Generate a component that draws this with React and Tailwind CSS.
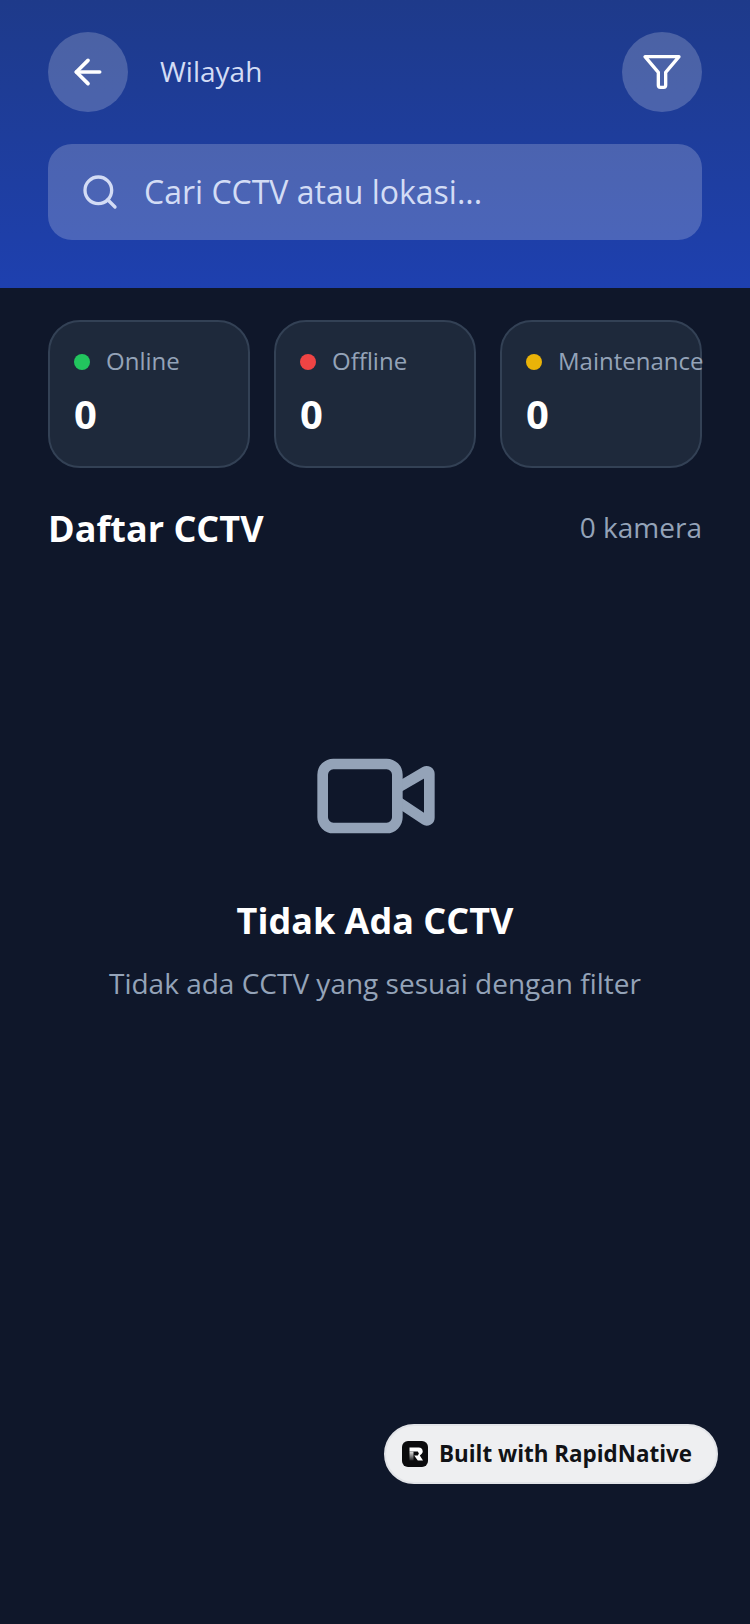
import React from "react";
import { ArrowLeft, Search, Video } from "lucide-react";

function Stat({ dot, label }) {
  return (
    <div className="flex h-[148px] w-[202px] flex-col rounded-[32px] border-2 border-[#334155] bg-[#1e293b] px-[24px] pt-[23px]">
      <div className="flex h-[32px] items-center gap-[16px]">
        <span className={`mt-[2px] h-[16px] w-[16px] shrink-0 rounded-full ${dot}`} />
        <span className="text-[24px] leading-[32px] whitespace-nowrap text-[#94a3b8]">{label}</span>
      </div>
      <div className="mt-[9px] text-[40px] leading-[56px] font-bold text-white">0</div>
    </div>
  );
}

export default function App() {
  return (
    <div className="relative flex h-[1624px] w-[750px] flex-col overflow-hidden bg-[#0f172a] font-['Open_Sans',sans-serif]">
      <header className="flex h-[288px] flex-col bg-gradient-to-b from-[#1e3a8a] to-[#1e40af] px-[48px] pt-[32px]">
        <div className="flex items-center justify-between">
          <div className="flex items-center gap-[32px]">
            <div className="flex h-[80px] w-[80px] items-center justify-center rounded-full bg-white/20">
              <ArrowLeft size={40} strokeWidth={2.2} className="text-white" />
            </div>
            <span className="-mt-[2px] text-[28px] leading-[40px] text-[#d3dcf5]">Wilayah</span>
          </div>
          <div className="flex h-[80px] w-[80px] items-center justify-center rounded-full bg-white/20">
            <svg width="40" height="40" viewBox="0 0 24 24" fill="none" stroke="white" strokeWidth="2" strokeLinecap="round" strokeLinejoin="round">
              <path d="M1.8 2.8h20.4l-8 9.4v7.8a1.2 1.2 0 0 1-1.2 1.2h-2a1.2 1.2 0 0 1-1.2-1.2v-7.8z" />
            </svg>
          </div>
        </div>
        <div className="mt-[32px] flex h-[96px] items-center gap-[24px] rounded-[24px] bg-white/20 px-[32px]">
          <Search size={40} strokeWidth={2} className="text-[#d3dcf5]" />
          <span className="text-[32px] leading-[44px] text-[#d3dcf5]">Cari CCTV atau lokasi...</span>
        </div>
      </header>

      <main className="flex flex-1 flex-col px-[48px] pt-[32px]">
        <div className="flex justify-between">
          <Stat dot="bg-[#22c55e]" label="Online" />
          <Stat dot="bg-[#ef4444]" label="Offline" />
          <Stat dot="bg-[#eab308]" label="Maintenance" />
        </div>
        <div className="mt-[35px] flex items-start justify-between">
          <h2 className="text-[36px] leading-[52px] font-bold text-white">Daftar CCTV</h2>
          <span className="mt-[4px] text-[28px] leading-[40px] text-[#94a3b8]">0 kamera</span>
        </div>
        <div className="mt-[177px] flex flex-col items-center">
          <Video size={128} strokeWidth={2} className="ml-[2px] text-[#94a3b8]" />
          <h3 className="mt-[35px] text-[36px] leading-[52px] font-bold text-white">Tidak Ada CCTV</h3>
          <p className="mt-[16px] text-[28px] leading-[40px] text-[#94a3b8]">Tidak ada CCTV yang sesuai dengan filter</p>
        </div>
      </main>

      <div className="absolute top-[1424px] left-[384px] flex h-[60px] w-[334px] items-center gap-[11px] rounded-full border-2 border-[#e2e4e8] bg-[#eeeff1] pl-[16px]">
        <svg width="26" height="26" viewBox="0 0 26 26">
          <defs>
            <linearGradient id="rfade" x1="0" y1="0" x2="0" y2="1">
              <stop offset="0" stopColor="#ffffff" stopOpacity="0.9" />
              <stop offset="1" stopColor="#ffffff" stopOpacity="0.1" />
            </linearGradient>
          </defs>
          <rect width="26" height="26" rx="6" fill="#0b0b0d" />
          <path d="M7.5 6.5h9.5a3.8 3.8 0 0 1 2.8 6.3l-2 1.6 3.2 5.1h-5.2l-3.6-5.1h3.6l1.1-1.9-1.1-1.9H7.5z" fill="white" />
          <path d="M7.5 10.6h4v8.9h-4z" fill="url(#rfade)" />
        </svg>
        <span className="text-[22.4px] leading-[32px] font-bold whitespace-nowrap text-[#111216]">Built with RapidNative</span>
      </div>
    </div>
  );
}
